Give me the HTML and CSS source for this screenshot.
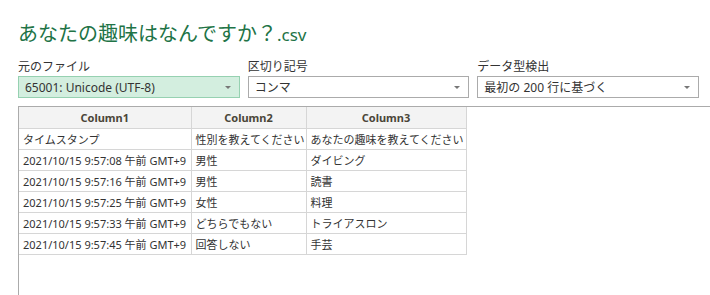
FILE: index.html
```html
<!DOCTYPE html>
<html lang="ja">
<head>
    <meta charset="UTF-8">
    <title>あなたの趣味はなんですか？.csv</title>
    <link rel="stylesheet" href="styles.css">
</head>
<body>
    <div class="dialog">
        <h1 class="file-title">あなたの趣味はなんですか？<span class="ext">.csv</span></h1>

        <div class="options">
            <div class="option">
                <label>元のファイル</label>
                <div class="select selected">
                    <span>65001: Unicode (UTF-8)</span>
                    <span class="arrow"></span>
                </div>
            </div>
            <div class="option">
                <label>区切り記号</label>
                <div class="select">
                    <span>コンマ</span>
                    <span class="arrow"></span>
                </div>
            </div>
            <div class="option">
                <label>データ型検出</label>
                <div class="select">
                    <span>最初の 200 行に基づく</span>
                    <span class="arrow"></span>
                </div>
            </div>
        </div>

        <div class="preview">
            <table class="data">
                <colgroup>
                    <col class="c1">
                    <col class="c2">
                    <col class="c3">
                </colgroup>
                <thead>
                    <tr>
                        <th>Column1</th>
                        <th>Column2</th>
                        <th>Column3</th>
                    </tr>
                </thead>
                <tbody>
                    <tr><td>タイムスタンプ</td><td>性別を教えてください</td><td>あなたの趣味を教えてください</td></tr>
                    <tr><td>2021/10/15 9:57:08 午前 GMT+9</td><td>男性</td><td>ダイビング</td></tr>
                    <tr><td>2021/10/15 9:57:16 午前 GMT+9</td><td>男性</td><td>読書</td></tr>
                    <tr><td>2021/10/15 9:57:25 午前 GMT+9</td><td>女性</td><td>料理</td></tr>
                    <tr><td>2021/10/15 9:57:33 午前 GMT+9</td><td>どちらでもない</td><td>トライアスロン</td></tr>
                    <tr><td>2021/10/15 9:57:45 午前 GMT+9</td><td>回答しない</td><td>手芸</td></tr>
                </tbody>
            </table>
        </div>
    </div>
</body>
</html>
```

FILE: styles.css
```css
* {
    margin: 0;
    padding: 0;
    box-sizing: border-box;
}

body {
    font-family: 'Noto Sans', 'Noto Sans CJK JP', sans-serif;
    background: #ffffff;
    color: #333333;
    overflow: hidden;
}

.dialog {
    padding: 20px 0 0 18px;
}

.file-title {
    height: 28px;
    font-size: 20px;
    font-weight: normal;
    line-height: 28px;
    color: #217346;
    margin-bottom: 9px;
}

.file-title .ext {
    font-size: 17px;
    line-height: 1;
}

.options {
    display: grid;
    grid-template-columns: repeat(3, 1fr);
    gap: 8px;
    margin-right: 11px;
}

.option label {
    display: block;
    font-size: 12px;
    line-height: 19px;
    color: #333333;
}

.select {
    display: flex;
    align-items: center;
    justify-content: space-between;
    height: 22px;
    padding: 0 8px 0 6px;
    border: 1px solid #ababab;
    background: #ffffff;
    font-size: 12px;
    color: #333333;
}

.select.selected {
    background: #d3eedf;
    border-color: #96d1b1;
}

.arrow {
    width: 0;
    height: 0;
    border-left: 3px solid transparent;
    border-right: 3px solid transparent;
    border-top: 3px solid #777777;
}

.preview {
    margin-top: 8px;
    height: 200px;
    border-top: 1px solid #ababab;
    border-left: 1px solid #ababab;
}

.data {
    table-layout: fixed;
    width: 447px;
    border-collapse: collapse;
    font-size: 11px;
    color: #333333;
}

.data .c1 {
    width: 172px;
}

.data .c2 {
    width: 115px;
}

.data .c3 {
    width: 160px;
}

.data th {
    background: #f3f3f3;
    font-weight: bold;
    color: #4a4538;
    height: 21px;
    border-right: 1px solid #d6d6d6;
    border-bottom: 1px solid #d6d6d6;
}

.data td {
    height: 21px;
    padding: 0 4px;
    white-space: nowrap;
    overflow: hidden;
    border-right: 1px solid #d6d6d6;
    border-bottom: 1px solid #d6d6d6;
}
```
